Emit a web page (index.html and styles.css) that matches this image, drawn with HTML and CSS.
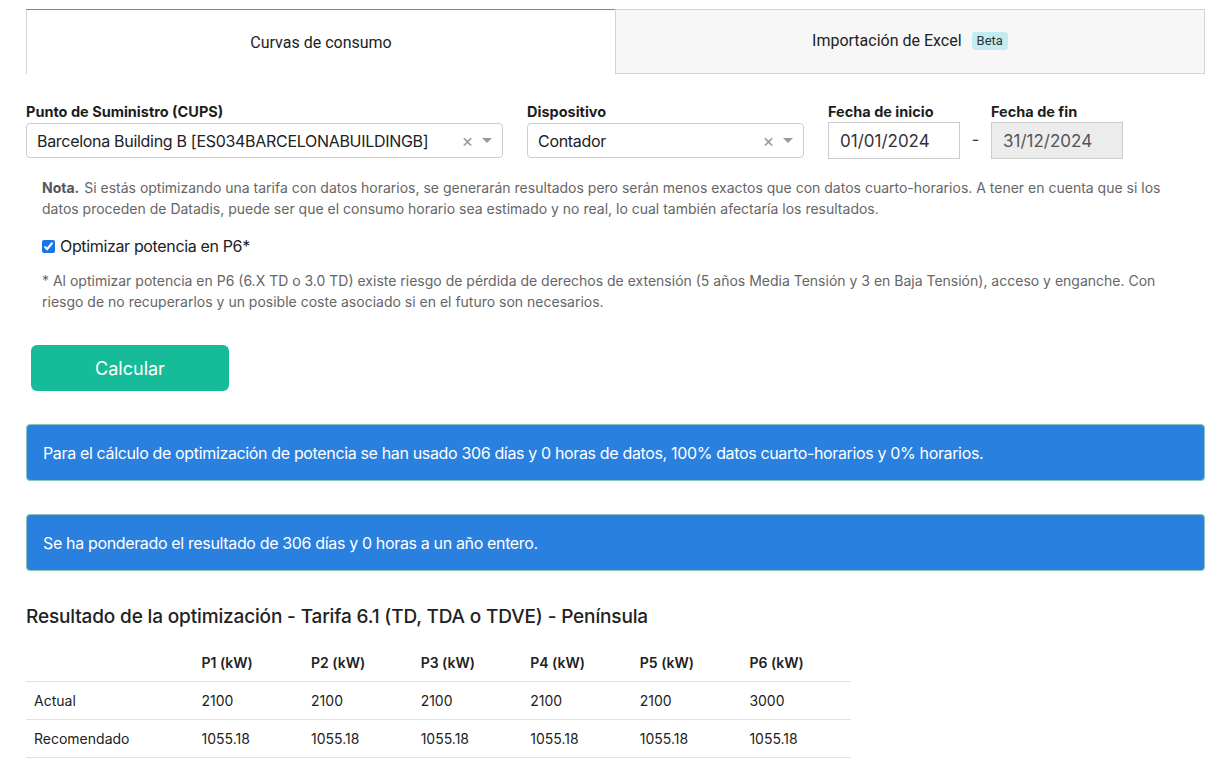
FILE: index.html
```html
<!DOCTYPE html>
<html lang="es">
  <head>
    <meta charset="UTF-8" />
    <title>Optimización de potencia</title>
    <link rel="stylesheet" href="styles.css">
  </head>
  <body>
    <div class="page">
      <div class="tabs">
        <div class="tab active">Curvas de consumo</div>
        <div class="tab">Importación de Excel <span class="badge">Beta</span></div>
      </div>

      <div class="filters">
        <div class="field field-cups">
          <label>Punto de Suministro (CUPS)</label>
          <div class="select">
            <span class="select-value">Barcelona Building B [ES034BARCELONABUILDINGB]</span>
            <span class="select-clear">×</span>
            <span class="select-arrow"></span>
          </div>
        </div>
        <div class="field field-device">
          <label>Dispositivo</label>
          <div class="select">
            <span class="select-value">Contador</span>
            <span class="select-clear">×</span>
            <span class="select-arrow"></span>
          </div>
        </div>
        <div class="field field-date">
          <label>Fecha de inicio</label>
          <div class="date-input">01/01/2024</div>
        </div>
        <div class="date-sep">-</div>
        <div class="field field-date">
          <label>Fecha de fin</label>
          <div class="date-input disabled">31/12/2024</div>
        </div>
      </div>

      <div class="options">
        <p class="note"><b class="note-title">Nota.</b> Si estás optimizando una tarifa con datos horarios, se generarán resultados pero serán menos exactos que con datos cuarto-horarios. A tener en cuenta que si los datos proceden de Datadis, puede ser que el consumo horario sea estimado y no real, lo cual también afectaría los resultados.</p>
        <label class="check">
          <input type="checkbox" checked />
          Optimizar potencia en P6*
        </label>
        <p class="note">* Al optimizar potencia en P6 (6.X TD o 3.0 TD) existe riesgo de pérdida de derechos de extensión (5 años Media Tensión y 3 en Baja Tensión), acceso y enganche. Con riesgo de no recuperarlos y un posible coste asociado si en el futuro son necesarios.</p>
      </div>

      <button class="btn-calc">Calcular</button>

      <div class="alert">Para el cálculo de optimización de potencia se han usado 306 días y 0 horas de datos, 100% datos cuarto-horarios y 0% horarios.</div>
      <div class="alert">Se ha ponderado el resultado de 306 días y 0 horas a un año entero.</div>

      <h3 class="result-title">Resultado de la optimización - Tarifa 6.1 (TD, TDA o TDVE) - Península</h3>

      <table class="result">
        <thead>
          <tr>
            <th></th>
            <th>P1 (kW)</th>
            <th>P2 (kW)</th>
            <th>P3 (kW)</th>
            <th>P4 (kW)</th>
            <th>P5 (kW)</th>
            <th>P6 (kW)</th>
          </tr>
        </thead>
        <tbody>
          <tr>
            <td>Actual</td>
            <td>2100</td>
            <td>2100</td>
            <td>2100</td>
            <td>2100</td>
            <td>2100</td>
            <td>3000</td>
          </tr>
          <tr>
            <td>Recomendado</td>
            <td>1055.18</td>
            <td>1055.18</td>
            <td>1055.18</td>
            <td>1055.18</td>
            <td>1055.18</td>
            <td>1055.18</td>
          </tr>
        </tbody>
      </table>
    </div>
  </body>
</html>
```

FILE: styles.css
```css
* {
  margin: 0;
  padding: 0;
  box-sizing: border-box;
}

body {
  font-family: Inter, "Liberation Sans", Arial, sans-serif;
  color: #212529;
  background: #fff;
}

.page {
  padding: 9px 27px 0 26px;
}

/* tabs */
.tabs {
  display: flex;
  height: 65px;
}

.tab {
  flex: 1;
  display: flex;
  align-items: center;
  justify-content: center;
  font-family: Roboto, "Liberation Sans", sans-serif;
  font-size: 16px;
  color: #222;
  background: #f7f7f7;
  border: 1px solid #d4d4d4;
  padding-bottom: 2px;
}

.tab.active {
  background: #fff;
  border-top: 1px solid #16bc9a;
  border-right: none;
  border-bottom: none;
  padding-bottom: 0;
}

.badge {
  display: inline-block;
  margin-left: 10px;
  padding: 1px 5px;
  font-size: 13px;
  line-height: 16px;
  background: #c3ecf1;
  color: #333;
  border-radius: 3px;
}

/* filters */
.filters {
  display: flex;
  align-items: flex-start;
  margin-top: 29px;
}

.field label {
  display: block;
  font-size: 14.5px;
  line-height: 17px;
  font-weight: 700;
  margin-bottom: 3px;
  color: #1d1d1d;
}

.field-date label {
  margin-bottom: 2px;
}

.field-cups {
  width: 477px;
}

.field-device {
  width: 277px;
  margin-left: 24px;
}

.field-date {
  width: 132px;
}

.field-device + .field-date {
  margin-left: 24px;
}

.select {
  display: flex;
  align-items: center;
  height: 35px;
  border: 1px solid #ccc;
  border-radius: 4px;
  padding: 0 10px;
  font-size: 16px;
  letter-spacing: -0.3px;
  color: #222;
}

.select-value {
  flex: 1;
  white-space: nowrap;
}

.select-clear {
  color: #999;
  font-size: 18px;
  margin-right: 9px;
}

.select-arrow {
  width: 0;
  height: 0;
  border-left: 5px solid transparent;
  border-right: 5px solid transparent;
  border-top: 5px solid #999;
}

.date-input {
  height: 37px;
  border: 1px solid #ccc;
  padding: 0 11px;
  display: flex;
  align-items: center;
  font-size: 17px;
  color: #333;
}

.date-input.disabled {
  background: #ececec;
  color: #555;
}

.date-sep {
  width: 31px;
  margin-top: 26px;
  text-align: center;
  font-size: 16px;
  color: #333;
}

/* options */
.options {
  padding: 18px 16px 0;
}

.note {
  font-size: 14px;
  line-height: 21px;
  color: #666;
}

.note-title {
  color: #555;
  margin-right: 1px;
}

.check {
  display: flex;
  align-items: center;
  gap: 5px;
  font-size: 16px;
  letter-spacing: -0.35px;
  color: #222;
  margin: 17px 0 14px;
}

.check input {
  width: 13px;
  height: 13px;
  accent-color: #1a73e8;
}

.btn-calc {
  display: block;
  margin: 33px 0 0 5px;
  width: 198px;
  height: 46px;
  border: none;
  border-radius: 6px;
  background: #16bc9a;
  color: #fff;
  font-family: inherit;
  font-size: 18px;
}

.alert {
  margin-top: 33px;
  height: 57px;
  display: flex;
  align-items: center;
  padding: 0 16px;
  background: #2980df;
  border: 1px solid #8cc5b9;
  border-radius: 4px;
  color: #fff;
  font-size: 16px;
  letter-spacing: -0.35px;
}

.result-title {
  margin-top: 34px;
  font-size: 19px;
  font-weight: 500;
  letter-spacing: -0.15px;
  color: #222;
}

.result {
  margin-top: 17px;
  width: 825px;
  border-collapse: collapse;
  font-size: 14px;
  color: #222;
}

.result th,
.result td {
  text-align: left;
  padding: 0 8px;
  height: 38px;
  border-bottom: 1px solid #dee2e6;
}

.result th {
  font-weight: 600;
  height: 36px;
}

.result th:first-child,
.result td:first-child {
  width: 168px;
}

.result th + th,
.result td + td {
  width: 110px;
}
```
